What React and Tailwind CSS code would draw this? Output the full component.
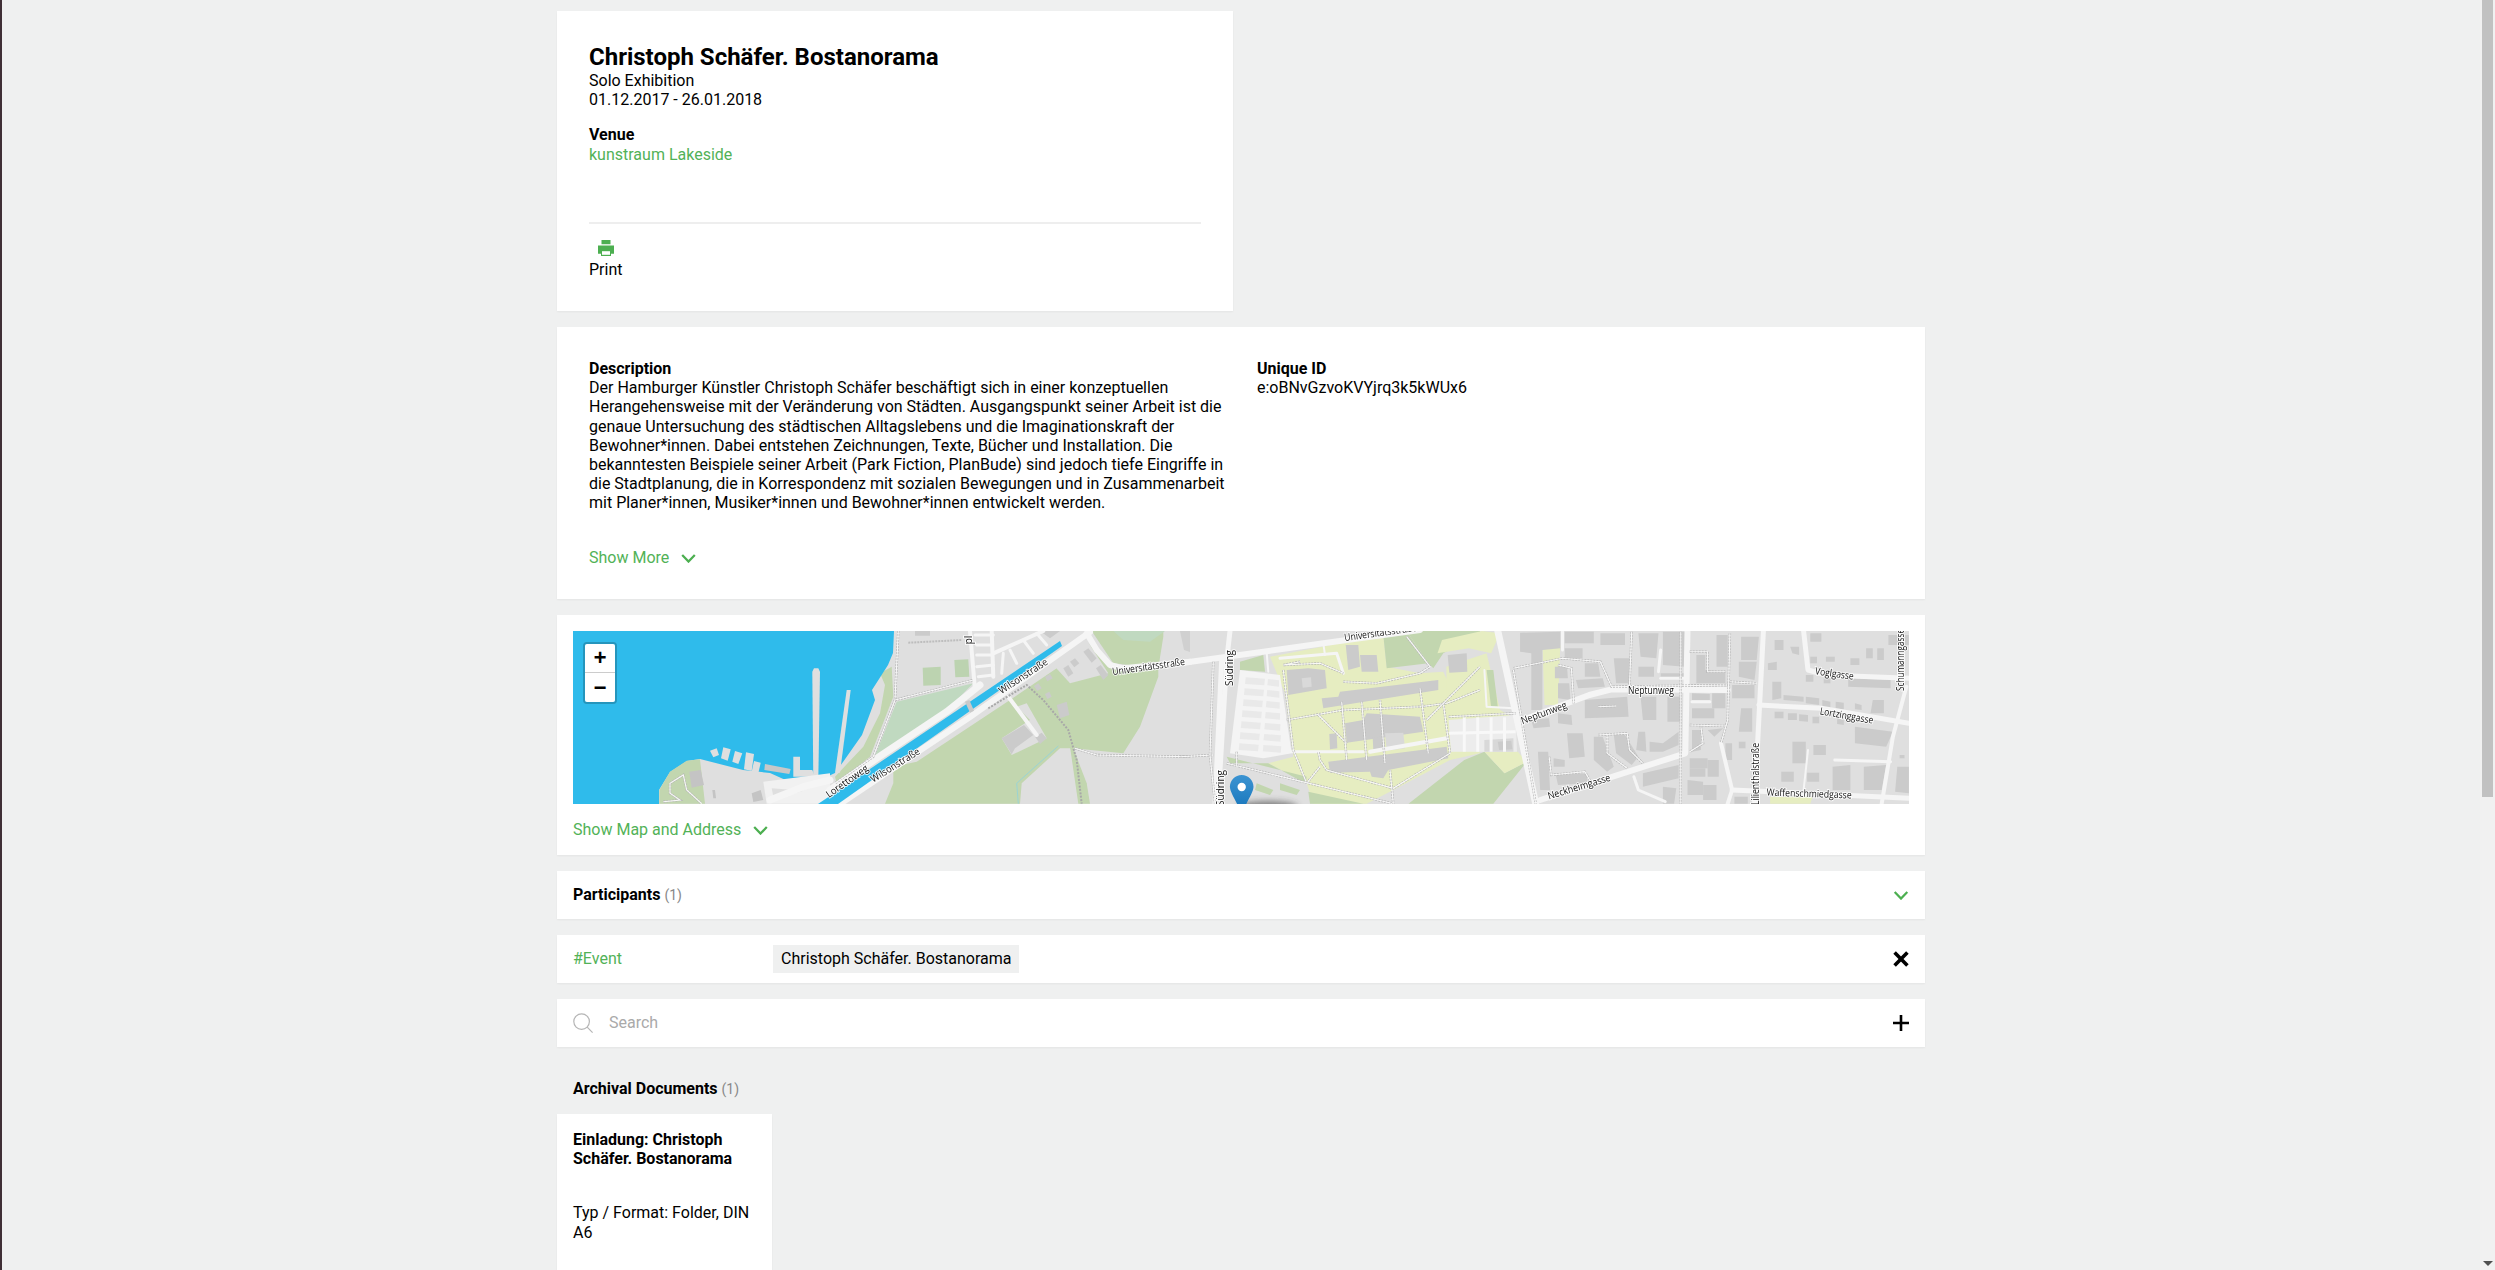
import React from "react";

const Z = {
  p: (x, y) => [x, y],
  z3: (x, y) => [1250 + x / 2.24, 620 + y / 3],
  z10: (x, y) => [1180 + x / 3, 620 + y / 3],
  z11: (x, y) => [570 + x / 3, 620 + y / 3],
  z12: (x, y) => [830 + x / 3, 620 + y / 3],
};
const pts = (z, a) => {
  const out = [];
  for (let i = 0; i < a.length; i += 2) {
    const [x, y] = Z[z](a[i], a[i + 1]);
    out.push(x.toFixed(1) + "," + y.toFixed(1));
  }
  return out.join(" ");
};

const LAND = "#dfdfdf";
const GREEN = "#c2d6af";
const LIGHTG = "#c0d9c0";
const YELLOW = "#e6edc1";
const WATER = "#2fbbeb";
const BLD = "#cbcbcb";
const ROAD = "#f5f5f5";

const polys = [
  // greens
  ["z12", GREEN, [150,160,185,140,190,230,120,410,20,490,15,470,100,380,150,280,165,195]],
  ["z12", "#bcd3b0", [278,143,332,140,332,195,280,197]],
  ["z12", "#bcd3b0", [373,120,415,118,418,170,376,172]],
  ["z12", LIGHTG, [200,245,430,190,350,270,130,420]],
  ["z12", GREEN, [165,551,190,490,190,440,260,425,540,240,680,145,770,65,800,95,835,140,880,150,985,145,985,170,930,320,880,400,730,385,690,385,575,490,570,551]],
  ["z12", GREEN, [730,385,770,490,780,551,745,551,720,380]],
  ["z12", LAND, [675,140,770,60,835,160,720,190]],
  ["z12", LAND, [560,260,590,250,650,355,545,405,515,355,600,300]],
  ["z12", GREEN, [785,33,850,130,985,145,1000,50,1000,33]],
  ["z12", LIGHTG, [850,33,1005,33,960,65,880,60]],
  ["p", "#d0d0d0", [1180,631,1190,631,1190,652,1184,650]],
  // campus
  ["z10", YELLOW, [270,110,610,45,620,140,720,160,790,155,810,200,900,150,900,400,810,420,640,510,560,551,400,551,380,490,265,430,340,410,315,220]],
  ["z10", GREEN, [610,45,680,33,745,130,620,145]],
  ["z10", GREEN, [680,33,900,33,900,60,850,65,790,100,760,145,745,130]],
  ["z10", GREEN, [180,125,250,105,255,155,180,150]],
  ["z10", GREEN, [140,410,380,470,375,490,265,430,150,430]],
  ["z10", GREEN, [230,490,280,510,270,525,225,510]],
  ["z10", GREEN, [300,490,360,510,350,525,300,510]],
  ["z10", GREEN, [385,515,550,551,390,551]],
  ["z3", YELLOW, [440,140,530,100,560,270,600,300,440,300]],
  ["z3", YELLOW, [420,100,490,85,540,100,560,40,520,33,430,60]],
  ["z3", GREEN, [355,551,480,420,525,395,570,460,620,425,545,551]],
  ["z3", YELLOW, [525,395,570,460,620,425,600,395]],
  ["z3", YELLOW, [655,75,695,75,690,255,660,255]],
  ["z3", GREEN, [530,150,545,150,555,260,540,260]],
  ["z3", YELLOW, [1165,530,1260,530,1255,551,1165,551]],
  // water
  ["p", WATER, [573,631,894,631,893,653,888,665,872,690,875,700,862,735,843,762,835,773,820,780,790,782,770,773,743,770,700,759,687,761,670,772,659,790,659,804,573,804]],
  // left shore
  ["z11", GREEN, [390,418,350,422,300,455,268,510,268,551,405,551]],
  ["z11", LAND, [727,155,732,145,745,145,750,155,745,480,730,480]],
  ["z12", LAND, [50,210,62,210,30,458,15,458]],
  ["z11", LAND, [670,410,690,410,690,450,727,450,735,470,670,470]],
  ["z11", LAND, [420,392,440,385,447,405,430,412]],
  ["z11", LAND, [460,382,482,388,473,422,453,415]],
  ["z11", LAND, [495,393,517,400,505,432,487,425]],
  ["z11", LAND, [528,397,552,402,545,453,522,448]],
  ["z11", LAND, [552,423,572,428,565,460,545,455]],
  ["z11", "#c8c8c8", [585,432,662,447,658,462,583,450]],
  ["z11", "#c4c4c4", [358,455,392,450,402,495,365,503]],
  ["z11", "#c4c4c4", [427,510,435,510,438,535,430,535]],
  ["z11", "#c4c4c4", [545,520,572,510,580,540,550,546]],
  ["z11", "#f1f1f1", [580,485,780,460,780,551,590,551]],
  ["z11", LAND, [605,505,700,512,612,540]],
  // parking lot
  ["z10", "#f4f4f4", [180,150,300,165,335,400,250,415,150,400]],
];

const buildings = [
  ["z12",[700,145,715,135,730,160,715,170]],["z12",[720,125,735,115,748,130,733,142]],["z12",[760,95,775,85,800,115,785,128]],["z12",[798,145,812,135,835,165,820,180]],
  ["z12",[645,170,660,162,668,175,652,184]],["z12",[612,198,625,190,635,205,622,213]],["z12",[645,222,658,215,665,230,652,237]],["z12",[680,255,710,245,718,285,690,295]],
  ["z12",[515,355,582,315,610,345,555,385,545,403]],["z12",[615,350,635,338,650,355,630,372]],["z12",[630,33,690,33,660,55]],["z12",[255,33,300,33,300,47,255,47]],
  ["z10",[320,150,385,145,435,150,440,205,325,225]],["z10",[425,235,475,230,480,215,775,180,775,210,430,265]],["z10",[495,310,550,300,560,280,720,290,730,335,500,368]],
  ["z10",[448,342,470,340,472,385,450,388]],["z10",[445,425,800,380,805,415,625,450,610,475,575,470,570,455,450,458]],["z10",[497,75,535,75,540,140,505,150]],
  ["z10",[540,105,590,105,595,155,545,155]],["z10",[803,105,860,100,862,155,808,158]],["z10",[578,352,612,350,615,385,580,390]],
  ["z3",[605,38,695,35,695,85,655,90,655,270,630,270,630,100,605,95]],["z3",[705,35,770,35,770,70,705,70]],["z3",[705,85,745,85,745,115,705,115]],["z3",[785,40,840,40,840,75,785,75]],
  ["z3",[683,140,710,140,712,175,683,175]],["z3",[750,130,780,130,785,170,750,170]],["z3",[730,180,790,175,795,200,735,205]],["z3",[815,115,850,115,850,190,820,190]],
  ["z3",[870,40,915,40,910,115,875,110]],["z3",[870,140,905,140,905,170,870,170]],["z3",[925,35,975,35,975,140,925,135]],["z3",[920,160,975,160,975,172,920,172]],
  ["z3",[690,190,715,190,718,240,690,235]],["z3",[690,280,720,285,722,315,690,310]],["z3",[630,300,670,295,672,320,635,325]],["z3",[750,240,845,230,848,290,750,295]],
  ["z3",[875,230,910,230,910,300,880,300]],["z3",[935,230,965,230,965,305,935,305]],["z3",[1000,105,1020,105,1020,150,1065,155,1065,190,1000,190]],["z3",[1045,45,1070,45,1070,140,1045,140]],
  ["z3",[990,220,1030,222,1030,240,990,240]],["z3",[1035,220,1065,220,1065,265,1035,265]],["z3",[990,265,1040,265,1040,295,990,295]],["z3",[1080,195,1130,195,1130,235,1080,235]],
  ["z3",[1100,265,1125,265,1125,335,1095,335]],["z3",[1100,50,1140,50,1135,120,1100,120]],["z3",[1095,125,1135,125,1130,180,1095,170]],["z3",[1095,365,1110,365,1110,385,1095,385]],
  ["z3",[1065,370,1080,370,1080,420,1065,420]],["z3",[645,395,668,395,672,510,650,510]],["z3",[680,415,705,420,705,440,680,440]],["z3",[685,465,755,460,755,490,690,495]],
  ["z3",[710,340,745,340,750,410,715,415]],["z3",[770,350,790,350,815,440,800,455,770,420]],["z3",[815,345,840,345,870,410,855,435,820,400]],["z3",[870,335,885,335,888,395,865,390]],
  ["z3",[895,365,925,370,960,335,960,375,925,395,895,395]],["z3",[990,330,1010,330,1010,390,990,395]],["z3",[1025,330,1060,325,1040,350]],["z3",[985,415,1025,415,1025,445,985,445]],
  ["z3",[1025,420,1050,420,1050,470,1025,470]],["z3",[985,445,1020,445,1020,470,985,470]],["z3",[880,460,960,435,960,475,880,500]],["z3",[980,480,1015,485,1015,525,980,525]],
  ["z3",[1015,495,1045,495,1045,540,1015,540]],["z3",[925,500,955,505,950,551,925,551]],["z3",[1085,530,1115,530,1115,551,1085,551]],["z3",[1175,60,1195,60,1195,90,1175,90]],
  ["z3",[1255,40,1280,40,1280,65,1255,65]],["z3",[1210,80,1230,80,1230,105,1215,100]],["z3",[1255,110,1270,110,1270,130,1255,130]],["z3",[1160,130,1180,125,1180,150,1160,150]],
  ["z3",[1170,185,1190,185,1190,235,1170,240]],["z3",[1195,225,1240,230,1240,245,1195,240]],["z3",[1245,230,1275,235,1275,255,1245,250]],["z3",[1282,240,1300,245,1300,265,1282,260]],
  ["z3",[1312,245,1330,248,1330,268,1312,265]],["z3",[1355,250,1370,255,1370,270,1355,268]],["z3",[1395,240,1420,240,1420,280,1390,280]],["z3",[1290,110,1310,110,1310,125,1290,125]],
  ["z3",[1345,115,1365,115,1365,135,1345,135]],["z3",[1380,85,1395,85,1395,115,1380,115]],["z3",[1405,85,1420,85,1420,120,1405,120]],["z3",[1430,45,1476,45,1476,75,1430,75]],
  ["z3",[1245,165,1262,165,1262,185,1245,185]],["z3",[1285,175,1300,175,1300,190,1285,190]],["z3",[1340,175,1435,180,1435,205,1340,200]],["z3",[1175,275,1195,275,1195,295,1175,295]],
  ["z3",[1205,280,1225,280,1225,300,1205,300]],["z3",[1230,283,1250,285,1250,305,1230,303]],["z3",[1260,290,1275,290,1275,310,1260,310]],["z3",[1315,295,1330,298,1330,315,1315,312]],
  ["z3",[1355,320,1440,335,1425,380,1355,370]],["z3",[1215,365,1245,365,1245,430,1215,430]],["z3",[1262,375,1290,375,1290,405,1262,405]],["z3",[1190,455,1218,455,1218,485,1190,485]],
  ["z3",[1248,458,1275,458,1275,485,1248,485]],["z3",[1305,440,1345,435,1345,510,1305,510]],["z3",[1375,440,1425,435,1415,510,1375,510]],["z3",[1450,440,1476,440,1476,520,1445,515]],
  ["z3",[1455,405,1466,405,1466,415,1455,415]],
];

const roads = [
  ["z12",7,[450,195,350,275,110,435,0,510]],
  ["z11",7,[780,480,700,500,600,540]],
  ["p",6,[1090,632,970,717,840,804]],
  ["z12",6,[770,40,800,90,840,135,880,145,1080,125]],
  ["z10",6,[0,130,500,60,720,30]],
  ["z12",4,[535,230,620,345]],
  ["z12",4,[420,33,435,210]],["z12",4,[485,33,490,170]],["z12",3,[435,45,490,45]],["z12",3,[440,75,485,75]],["z12",3,[440,105,485,105]],["z12",3,[440,140,490,135]],["z12",3,[445,170,490,165]],
  ["z12",4,[490,100,640,33]],["z12",3,[540,90,560,130]],["z12",3,[580,60,610,100]],["z12",3,[520,100,515,160]],["z12",3,[620,40,650,75]],
  ["z10",5,[150,33,140,120,120,450]],["z10",5,[125,120,105,551]],
  ["z10",3,[300,115,470,100,490,160]],["z10",4,[570,395,800,355]],["z10",3,[335,395,550,395]],["z10",2,[260,100,265,155]],["z10",2,[430,70,435,105]],
  ["z3",7,[555,33,640,551]],["z3",6,[610,300,760,225,810,208,1070,210]],["z3",6,[980,33,975,400,650,540]],["z3",5,[1150,33,1130,551]],
  ["z3",5,[1140,255,1280,265,1476,310]],["z3",5,[1240,33,1250,150,1290,165,1476,175]],["z3",4,[1470,200,1440,350,1415,551]],["z3",5,[1080,510,1476,535]],
  ["z3",3,[1310,420,1435,425]],["z3",2,[1250,390,1240,510]],["z3",3,[920,175,975,175]],["z3",3,[990,245,1030,245]],["z3",3,[700,35,700,90]],["z3",3,[920,90,915,155]],
  ["z3",3,[860,470,870,510,930,545]],["z3",4,[1055,370,1080,510,1070,551]],["z3",2,[525,150,530,260,590,265]],
];

const foots = [
  ["z12",[205,33,195,240,130,410,15,490]],["z12",[195,240,430,180]],["z12",[735,385,800,405,1080,410]],
  ["z11",[280,545,330,540,300,520,300,490,340,465,350,510,395,551]],
  ["z10",[320,300,490,270,720,260,800,250,900,210]],["z10",[310,150,340,390,380,490,420,440]],["z10",[415,285,500,370]],["z10",[485,245,500,420]],["z10",[545,245,560,420]],
  ["z10",[600,240,615,430]],["z10",[720,205,745,400]],["z10",[790,250,810,400,640,505,440,450,420,420,415,395]],["z10",[140,430,640,551]],["z10",[170,395,170,440]],
  ["z10",[490,185,590,190,720,160,750,140,680,50]],["z10",[360,125,310,135,420,130,490,160]],["z10",[740,300,790,250,900,140]],["z10",[630,450,640,551]],["z10",[0,410,100,405]],["z10",[100,125,90,405,105,551]],
  ["z3",[590,145,700,115,785,125,810,200,1075,195]],["z3",[690,135,720,145,725,250]],["z3",[1075,40,1070,300,1055,370]],["z3",[985,95,1025,95,1025,155,1065,155]],["z3",[985,315,1065,318]],
  ["z3",[1010,320,1015,370,985,395]],["z3",[1075,185,1135,190]],["z3",[780,345,845,340,850,390,880,430]],["z3",[800,345,800,400,845,445]],["z3",[780,260,820,258]],
  ["z3",[670,410,675,465,750,455,765,490]],["z3",[855,35,850,195]],["z3",[965,35,965,551]],["z3",[590,150,640,551]],["z3",[445,290,595,280]],
];

const labels = [
  ["Lorettoweg", 849, 784, -35, 49, "middle"],
  ["Wilsonstraße", 897, 768, -32, 56, "middle"],
  ["Wilsonstraße", 1025, 679, -33, 56, "middle"],
  ["Universitätsstraße", 1149, 670, -8, 73, "middle"],
  ["Universitätsstraße", 1381, 636, -8, 73, "middle"],
  ["Südring", 1224, 788, -90, 36, "middle"],
  ["Südring", 1233, 668, -90, 36, "middle"],
  ["pl", 972, 640, -90, 9, "middle"],
  ["Neptunweg", 1545, 716, -20, 48, "middle"],
  ["Neptunweg", 1651, 694, 0, 46, "middle"],
  ["Neckheimgasse", 1580, 790, -17, 65, "middle"],
  ["Voglgasse", 1834, 677, 8, 39, "middle"],
  ["Lortzinggasse", 1846, 719, 10, 54, "middle"],
  ["Waffenschmiedgasse", 1809, 797, 2, 85, "middle"],
  ["Lilienthalstraße", 1759, 774, -90, 62, "middle"],
  ["Schumanngasse", 1904, 660, -90, 62, "middle"],
];

function MapDrawing() {
  const stalls = [];
  for (let i = 0; i < 7; i++) {
    const t = i / 7;
    const y = 172 + i * 33;
    const lx = 197 - t * 22;
    const rx = 264 - t * 16;
    stalls.push(pts("z10", [lx, y, lx + 58, y + 4, lx + 56, y + 24, lx - 2, y + 20]));
    stalls.push(pts("z10", [rx, y + 5, rx + 33 + t * 24, y + 9, rx + 33 + t * 22, y + 28, rx - 2, y + 24]));
  }
  return (
    <svg viewBox="573 631 1336 173" className="block h-[173px] w-full blur-[0.4px]" preserveAspectRatio="none">
      <defs>
        <linearGradient id="pin" x1="0" y1="0" x2="0" y2="1">
          <stop offset="0" stopColor="#3b94d2" />
          <stop offset="0.7" stopColor="#1f7cc0" />
          <stop offset="1" stopColor="#1a6ba8" />
        </linearGradient>
        <filter id="sh" x="-40%" y="-100%" width="180%" height="300%">
          <feGaussianBlur stdDeviation="3" />
        </filter>
      </defs>
      <rect x="573" y="631" width="1336" height="173" fill={LAND} />
      {polys.map(([z, f, a], i) => <polygon key={i} points={pts(z, a)} fill={f} />)}
      {stalls.map((s, i) => <polygon key={i} points={s} fill="#e9e9e9" />)}
      <polygon points={pts("z3", [445, 300, 595, 285, 598, 395, 450, 395])} fill="#ececec" />
      <polygon points={pts("z3", [525, 360, 590, 355, 590, 395, 525, 395])} fill="#d8d8d8" />
      <polygon points={pts("z3", [555, 365, 585, 362, 588, 388, 558, 390])} fill={BLD} />
      {[480, 510, 540, 570].map((x) => <polyline key={x} points={pts("z3", [x, 292, x, 395])} stroke="#f8f8f8" strokeWidth="3" fill="none" />)}
      <polyline points={pts("z3", [445, 340, 595, 335])} stroke="#f8f8f8" strokeWidth="3" fill="none" />
      {buildings.map(([z, a], i) => <polygon key={i} points={pts(z, a)} fill={BLD} />)}
      <polygon points={pts("z10", [365, 175, 393, 172, 395, 200, 368, 203])} fill="#d9d9d9" />
      <polygon points={pts("z10", [615, 340, 670, 338, 675, 385, 620, 392])} fill="#d9d9d9" />
      {roads.map(([z, w, a], i) => <polyline key={i} points={pts(z, a)} stroke={ROAD} strokeWidth={w} fill="none" strokeLinejoin="round" strokeLinecap="round" />)}
      {foots.map(([z, a], i) => (
        <g key={i} fill="none">
          <polyline points={pts(z, a)} stroke="#b5b5b5" strokeWidth="2.4" strokeDasharray="2 1" />
          <polyline points={pts(z, a)} stroke="#f8f8f8" strokeWidth="1.1" />
        </g>
      ))}
      <polyline points={pts("z12", [475, 265, 590, 195, 640, 240, 715, 330, 740, 420, 755, 551])} stroke="#a8a8a8" strokeWidth="2" strokeDasharray="2 1.4" fill="none" />
      <polyline points={pts("z12", [235, 68, 395, 60])} stroke="#bdbdbd" strokeWidth="2" strokeDasharray="2 1" fill="none" />
      <polyline points={pts("z12", [565, 551, 560, 490, 685, 378])} stroke="#8fd3dd" strokeWidth="0.8" fill="none" />
      <polygon points="1060,641 1062,646 838,804 818,804" fill={WATER} />
      <polygon points={pts("z12", [405, 245, 418, 240, 432, 272, 420, 278])} fill="#c9c9c9" />
      {labels.map(([t, x, y, r, l, a], i) => (
        <text key={i} x={x} y={y} transform={`rotate(${r} ${x} ${y})`} textAnchor={a} textLength={l} lengthAdjust="spacingAndGlyphs" fontFamily="'Open Sans', sans-serif" fontSize="10" fill="#111" stroke="#fff" strokeWidth="2" strokeOpacity="0.85" paintOrder="stroke">{t}</text>
      ))}
      <ellipse cx="1268" cy="807" rx="30" ry="6" fill="#333" opacity="0.55" filter="url(#sh)" />
      <path d="M1241.7 775c6.6 0 11.8 5.2 11.8 11.8 0 6-7.8 16-11.8 28-4-12-11.8-22-11.8-28 0-6.6 5.2-11.8 11.8-11.8z" fill="url(#pin)" />
      <circle cx="1241.7" cy="787" r="4.2" fill="#fff" />
    </svg>
  );
}

const Chevron = ({ className }) => (
  <svg viewBox="0 0 16 10" className={className} fill="none" stroke="#4caf50" strokeWidth="2.5">
    <path d="M1 1.2 8 8.4l7-7.2" />
  </svg>
);

const Card = ({ className = "", children }) => (
  <div className={"bg-white shadow-[0_1px_2px_rgba(0,0,0,0.05)] " + className}>{children}</div>
);

const Row = ({ children }) => (
  <Card className="flex h-12 items-center justify-between px-4">{children}</Card>
);

export default function App() {
  return (
    <div className="flex h-screen overflow-hidden bg-[#eff0f0] font-[Roboto,sans-serif] text-base leading-[19.2px] text-black">
      <div className="w-[2px] shrink-0 bg-[#3f2f36]" />
      <main className="min-w-0 flex-1 overflow-hidden pt-[11px]">
        <div className="mx-auto flex w-[1368px] flex-col gap-4">
          <Card className="w-[676px] p-8">
            <h1 className="text-2xl leading-[28px] font-bold">Christoph Schäfer. Bostanorama</h1>
            <p>Solo Exhibition</p>
            <p>01.12.2017 - 26.01.2018</p>
            <p className="mt-4 font-bold">Venue</p>
            <p className="text-[#52b257]">kunstraum Lakeside</p>
            <hr className="mt-[58px] border-t-2 border-[#eeeeee]" />
            <div className="mt-4 inline-flex flex-col items-center">
              <svg viewBox="0 0 16 16" className="block h-4 w-4" fill="#4caf50">
                <path d="M3.5 0h9v4.2h-9zM0 5.4h16v8.4h-3V16H3v-2.2H0z" />
                <path d="M4 11.2h8v3.6H4z" fill="#fff" />
              </svg>
              <span className="mt-[4px]">Print</span>
            </div>
          </Card>

          <Card className="p-8">
            <div className="grid grid-cols-2 gap-8">
              <div>
                <p className="font-bold">Description</p>
                <p>Der Hamburger Künstler Christoph Schäfer beschäftigt sich in einer konzeptuellen Herangehensweise mit der Veränderung von Städten. Ausgangspunkt seiner Arbeit ist die genaue Untersuchung des städtischen Alltagslebens und die Imaginationskraft der Bewohner*innen. Dabei entstehen Zeichnungen, Texte, Bücher und Installation. Die bekanntesten Beispiele seiner Arbeit (Park Fiction, PlanBude) sind jedoch tiefe Eingriffe in die Stadtplanung, die in Korrespondenz mit sozialen Bewegungen und in Zusammenarbeit mit Planer*innen, Musiker*innen und Bewohner*innen entwickelt werden.</p>
              </div>
              <div>
                <p className="font-bold">Unique ID</p>
                <p>e:oBNvGzvoKVYjrq3k5kWUx6</p>
              </div>
            </div>
            <div className="mt-[35px] flex items-center gap-3 text-[#52b257]">
              <span>Show More</span>
              <Chevron className="mt-[2px] h-[9px] w-[15px]" />
            </div>
          </Card>

          <Card className="p-4">
            <div className="relative overflow-hidden">
              <MapDrawing />
              <div className="absolute top-[11px] left-[10px] flex w-[34px] flex-col rounded-[4px] border-2 border-[rgba(0,0,0,0.2)] bg-clip-padding font-['Liberation_Mono',monospace] text-[22px] font-bold">
                <div className="flex h-[29px] items-center justify-center rounded-t-[2px] border-b border-[#cccccc] bg-white pt-[5px] leading-[24px]">+</div>
                <div className="flex h-[29px] items-center justify-center rounded-b-[2px] bg-white pt-[5px] leading-[24px]">−</div>
              </div>
            </div>
            <div className="mt-4 flex items-center gap-3 text-[#52b257]">
              <span>Show Map and Address</span>
              <Chevron className="mt-[2px] h-[9px] w-[15px]" />
            </div>
          </Card>

          <Row>
            <span>
              <span className="font-bold">Participants</span>{" "}
              <span className="text-sm text-[#888888]">(1)</span>
            </span>
            <Chevron className="h-[9px] w-[16px]" />
          </Row>

          <Row>
            <div className="flex items-center">
              <span className="w-[200px] text-[#52b257]">#Event</span>
              <span className="bg-[#eff0f0] px-2 py-1">Christoph Schäfer. Bostanorama</span>
            </div>
            <svg viewBox="0 0 16 16" className="h-4 w-4" stroke="#000" strokeWidth="3.6" fill="none">
              <path d="M1.6 1.6l12.8 12.8M14.4 1.6 1.6 14.4" />
            </svg>
          </Row>

          <Row>
            <div className="flex items-center">
              <svg viewBox="0 0 20 20" className="h-5 w-5" fill="none" stroke="#b5b5b5" strokeWidth="1.2">
                <circle cx="8.6" cy="8.6" r="7.8" />
                <path d="M14.2 14.2 19.6 19.6" />
              </svg>
              <span className="ml-4 text-[#aaaaaa]">Search</span>
            </div>
            <svg viewBox="0 0 16 16" className="h-4 w-4" stroke="#000" strokeWidth="2.6" fill="none">
              <path d="M8 0v16M0 8h16" />
            </svg>
          </Row>

          <div className="mt-4 px-4">
            <span className="font-bold">Archival Documents</span>{" "}
            <span className="text-sm text-[#888888]">(1)</span>
          </div>

          <Card className="mt-[-1px] w-[215px] p-4 pb-12">
            <p className="font-bold">Einladung: Christoph Schäfer. Bostanorama</p>
            <p className="mt-[35px]">Typ / Format: Folder, DIN A6</p>
          </Card>
        </div>
      </main>
      <div className="flex w-[15px] shrink-0 flex-col items-center bg-[#f1f1f1]">
        <div className="h-[797px] w-[11px] bg-[#c1c1c1]" />
        <div className="mt-auto mb-[4px] h-0 w-0 border-x-[5px] border-t-[5px] border-x-transparent border-t-[#505050]" />
      </div>
    </div>
  );
}
